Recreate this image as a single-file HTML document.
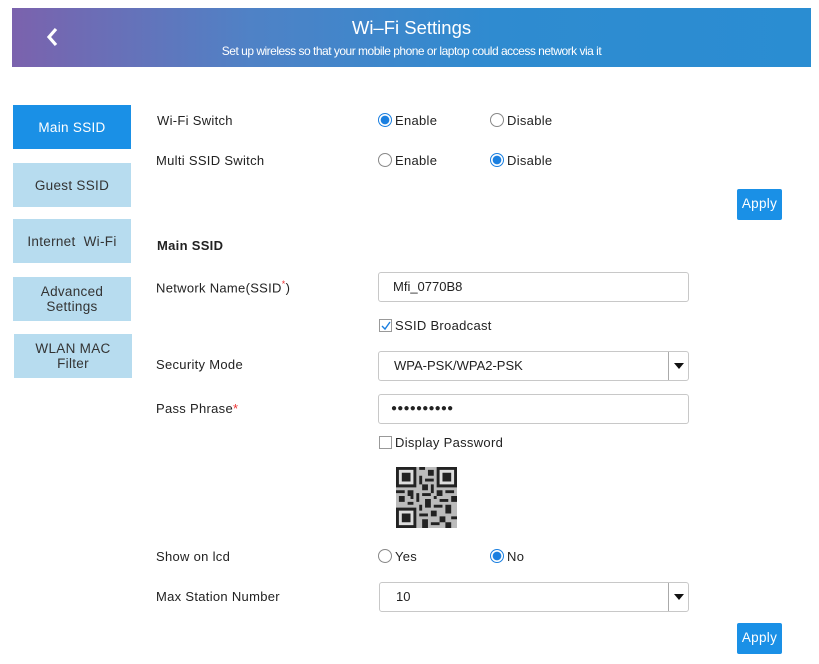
<!DOCTYPE html>
<html><head><meta charset="utf-8"><style>
*{margin:0;padding:0;box-sizing:border-box}
body{width:819px;height:664px;background:#fff;font-family:"Liberation Sans",sans-serif;color:#222;position:relative;overflow:hidden;font-size:13px}
.a{position:absolute}
.hdr{left:12px;top:8px;width:799px;height:59px;background:linear-gradient(90deg,#7b62ad 0%,#4f82c6 30%,#2f8bd0 60%,#2a8dd2 100%);color:#fff}
.nav{width:118px;height:44px;background:#b7dcef;color:#333;font-size:13.5px;display:flex;align-items:center;justify-content:center;text-align:center;line-height:15px;letter-spacing:.3px}
.lbl{font-size:13px;letter-spacing:.3px;color:#222}
.r{width:14px;height:14px;border-radius:50%;border:1px solid #888;background:#fff}
.r.on{border-color:#1a7fe0;background:radial-gradient(circle,#1a7fe0 0 4px,#fff 4.6px)}
.inp{border:1px solid #c8c8c8;border-radius:3px;height:30px;background:#fff;padding-left:14px;line-height:28px;font-size:13px}
.btn{background:#1a90e6;color:#fff;width:45px;height:31px;border-radius:2px;font-size:13.5px;text-align:center;line-height:29px;letter-spacing:.3px}
.dd{position:absolute;right:0;top:0;width:20px;height:28px;border-left:1px solid #aaa}
.dd:after{content:"";position:absolute;left:5px;top:11px;border-left:5px solid transparent;border-right:5px solid transparent;border-top:6px solid #111}
.cb{width:13px;height:13px;border:1px solid #999;background:#fff}
</style></head><body>
<div class="a hdr">
<svg class="a" style="left:34px;top:19px" width="14" height="20" viewBox="0 0 14 20"><path d="M10 2 L3 10 L10 18" stroke="#fff" stroke-width="3.2" fill="none"/></svg>
<div class="a" style="left:0;width:799px;top:9px;text-align:center;font-size:18.5px">Wi–Fi Settings</div>
<div class="a" style="left:0;width:799px;top:36px;text-align:center;font-size:12px;letter-spacing:-.5px">Set up wireless so that your mobile phone or laptop could access network via it</div>
</div>

<div class="a nav" style="left:13px;top:105px;background:#1a90e6;color:#fff">Main SSID</div>
<div class="a nav" style="left:13px;top:163px">Guest SSID</div>
<div class="a nav" style="left:13px;top:219px">Internet&nbsp; Wi-Fi</div>
<div class="a nav" style="left:13px;top:277px">Advanced<br>Settings</div>
<div class="a nav" style="left:14px;top:334px">WLAN MAC<br>Filter</div>

<div class="a lbl" style="left:157px;top:113px">Wi-Fi Switch</div>
<div class="a r on" style="left:378px;top:113px"></div><div class="a lbl" style="left:395px;top:113px">Enable</div>
<div class="a r" style="left:490px;top:113px"></div><div class="a lbl" style="left:507px;top:113px">Disable</div>

<div class="a lbl" style="left:156px;top:153px">Multi SSID Switch</div>
<div class="a r" style="left:378px;top:153px"></div><div class="a lbl" style="left:395px;top:153px">Enable</div>
<div class="a r on" style="left:490px;top:153px"></div><div class="a lbl" style="left:507px;top:153px">Disable</div>

<div class="a btn" style="left:737px;top:189px">Apply</div>

<div class="a lbl" style="left:157px;top:238px;font-weight:bold">Main SSID</div>

<div class="a lbl" style="left:156px;top:279px">Network Name(SSID<sup style="color:#e33;font-size:9px">*</sup>)</div>
<div class="a inp" style="left:378px;top:272px;width:311px">Mfi_0770B8</div>

<div class="a cb" style="left:379px;top:319px"></div>
<svg class="a" style="left:380px;top:320px" width="12" height="12"><path d="M2 6 L5 9 L10 2" stroke="#1a7fe0" stroke-width="1.4" fill="none"/></svg>
<div class="a lbl" style="left:395px;top:318px">SSID Broadcast</div>

<div class="a lbl" style="left:156px;top:357px">Security Mode</div>
<div class="a inp" style="left:378px;top:351px;width:311px;padding-left:15px">WPA-PSK/WPA2-PSK<div class="dd"></div></div>

<div class="a lbl" style="left:156px;top:401px">Pass Phrase<span style="color:#e33">*</span></div>
<div class="a inp" style="left:378px;top:394px;width:311px;font-size:10px;letter-spacing:.2px;padding-left:12px">●●●●●●●●●●</div>

<div class="a cb" style="left:379px;top:436px"></div>
<div class="a lbl" style="left:395px;top:435px">Display Password</div>

<svg class="a" style="left:396px;top:467px" width="61" height="61" viewBox="0 0 21 21">
<rect width="21" height="21" fill="#bbb"/>
<g fill="#222"><path d="M0 0h7v7h-7zM14 0h7v7h-7zM0 14h7v7h-7z"/></g>
<g fill="#ddd"><path d="M1 1h5v5h-5zM15 1h5v5h-5zM1 15h5v5h-5z"/></g>
<g fill="#222"><path d="M2 2h3v3h-3zM16 2h3v3h-3zM2 16h3v3h-3z"/>
<path d="M8 0h2v1h-2zM11 1h2v2h-2zM8 3h1v3h-1zM10 4h3v1h-3zM9 6h2v2h-2zM12 6h1v3h-1zM0 8h3v1h-3zM4 8h2v2h-2zM1 10h2v2h-2zM7 9h1v3h-1zM9 9h3v1h-3zM14 8h2v2h-2zM17 8h3v1h-3zM19 10h2v2h-2zM15 11h3v1h-3zM10 11h2v3h-2zM4 12h2v1h-2zM8 13h1v2h-1zM13 13h3v1h-3zM17 13h2v3h-2zM12 15h2v2h-2zM8 16h3v1h-3zM15 17h2v2h-2zM19 17h2v1h-2zM9 18h2v3h-2zM12 19h3v1h-3zM17 19h2v2h-2zM13 10h1v1h-1zM5 10h1v1h-1z"/></g>
</svg>

<div class="a lbl" style="left:156px;top:549px">Show on lcd</div>
<div class="a r" style="left:378px;top:549px"></div><div class="a lbl" style="left:395px;top:549px">Yes</div>
<div class="a r on" style="left:490px;top:549px"></div><div class="a lbl" style="left:507px;top:549px">No</div>

<div class="a lbl" style="left:156px;top:589px">Max Station Number</div>
<div class="a inp" style="left:379px;top:582px;width:310px;padding-left:16px">10<div class="dd"></div></div>

<div class="a btn" style="left:737px;top:623px">Apply</div>
</body></html>
